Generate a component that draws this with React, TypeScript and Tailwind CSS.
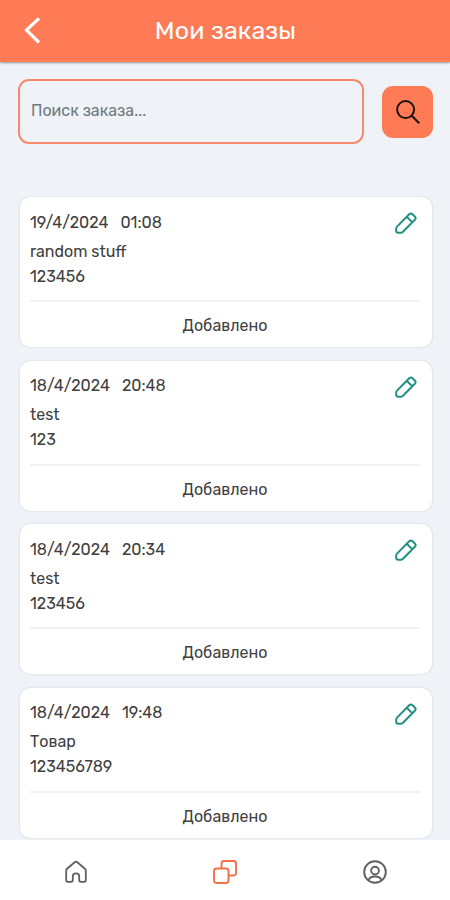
import React from "react";

type Order = {
  date: string;
  time: string;
  title: string;
  code: string;
};

const orders: Order[] = [
  { date: "19/4/2024", time: "01:08", title: "random stuff", code: "123456" },
  { date: "18/4/2024", time: "20:48", title: "test", code: "123" },
  { date: "18/4/2024", time: "20:34", title: "test", code: "123456" },
  { date: "18/4/2024", time: "19:48", title: "Товар", code: "123456789" },
];

function Pencil() {
  return (
    <svg className="h-[22px] w-[22px]" viewBox="0 0 22 22" fill="none" stroke="#209180" strokeWidth="2" strokeLinecap="round" strokeLinejoin="round">
      <path d="M2 14.600 14.200 2.200q1.700-1.500 3.300 0l2.300 2.300q1.600 1.600 0 3.300L7.700 20q-.8.8-2 .8H3.200q-2 0-2-2v-2.200q0-1.200.8-2ZM12 5l5.100 5.100" />
    </svg>
  );
}

function OrderCard({ order }: { order: Order }) {
  return (
    <article className="flex h-[150px] shrink-0 flex-col rounded-[10px] bg-white pl-[10px] pr-[12px] shadow-[0_0_2px_rgba(80,95,120,0.28)]">
      <div className="flex h-[105px] justify-between border-b-2 border-[#eff1f3] pr-[3px] pt-[13.5px]">
        <div className="text-base text-[#404040]">
          <div className="flex h-6 gap-[12px] leading-6">
            <span className="whitespace-nowrap">{order.date}</span>
            <span>{order.time}</span>
          </div>
          <div className="mt-[5px] h-6 leading-6">{order.title}</div>
          <div className="mt-px h-6 leading-6">{order.code}</div>
        </div>
        <button aria-label="Edit" className="mt-[1.5px] h-[22px]"><Pencil /></button>
      </div>
      <div className="flex h-[45px] items-center justify-center pt-[3px] text-base text-[#404040]">Добавлено</div>
    </article>
  );
}

export default function App() {
  return (
    <div className="flex h-[900px] w-[450px] flex-col overflow-hidden bg-[#eff3f8] font-['Rubik','Roboto',sans-serif]">
      <header className="z-10 grid h-[62px] shrink-0 grid-cols-[65px_320px_65px] items-center bg-[#ff7b55] shadow-[0_1px_2px_rgba(0,0,0,0.4)]">
        <button aria-label="Back" className="pl-[23px]">
          <svg className="h-[28px] w-[18px]" viewBox="0 0 18 28" fill="none" stroke="white" strokeWidth="3.2">
            <path d="M16 1.300 3.500 13.100 16 25.500" />
          </svg>
        </button>
        <h1 className="pl-[1px] text-center text-[25px] leading-8 tracking-[0.15px] text-white">Мои заказы</h1>
      </header>
      <div className="flex h-[134px] shrink-0 items-start justify-between pl-[18px] pr-[17px] pt-[17px]">
        <div className="flex h-[65px] w-[346px] items-center rounded-[11px] border-2 border-[#f68a6c] pb-[2px] pl-[11px]">
          <input aria-label="Search" placeholder="Поиск заказа..." className="w-full bg-transparent text-base outline-none placeholder:text-[#707780]" />
        </div>
        <button aria-label="Find" className="mt-[7px] flex h-[52px] w-[51px] items-center justify-center rounded-[11px] bg-[#ff7b55]">
          <svg className="h-6 w-6" viewBox="0 0 24 24" fill="none" stroke="#17120f" strokeWidth="2">
            <circle cx="9.6" cy="9.6" r="8.5" />
            <path d="m15.8 15.8 7.4 7.4" />
          </svg>
        </button>
      </div>
      <main className="flex h-[644px] shrink-0 flex-col gap-[13.6px] overflow-hidden px-[20px] pr-[18px] pt-px">
        {orders.map((order) => <OrderCard key={`${order.date}-${order.time}`} order={order} />)}
      </main>
      <nav className="grid h-[60px] shrink-0 grid-cols-3 items-center justify-items-center bg-white pl-[1px] pt-[3px]">
        <button aria-label="Home">
          <svg className="h-6 w-6" viewBox="0 0 24 24" fill="none" stroke="#606060" strokeWidth="1.8" strokeLinejoin="round">
            <path d="M2.2 10.5q0-1 .8-1.7l7.7-6.5q1.3-1.1 2.6 0L21 8.800q.8.7.8 1.700v9.600q0 1.700-1.700 1.700h-3.200q-1.700 0-1.700-1.700v-3.700c0-4-6.400-4-6.400 0v3.700q0 1.700-1.700 1.700H3.900q-1.700 0-1.700-1.700Z" />
          </svg>
        </button>
        <button aria-label="Orders">
          <svg className="h-6 w-6" viewBox="0 0 24 24" fill="none" stroke="#f47148" strokeWidth="1.9">
            <rect x="1" y="8.500" width="14.500" height="14.500" rx="2.500" />
            <path d="M8.500 8.500V3.500q0-2.500 2.500-2.500H20.500q2.500 0 2.500 2.500v9.500q0 2.500-2.500 2.500h-5" />
          </svg>
        </button>
        <button aria-label="Profile">
          <svg className="h-6 w-6" viewBox="0 0 24 24" fill="none" stroke="#606060" strokeWidth="1.9">
            <circle cx="12" cy="12" r="10.800" />
            <circle cx="12" cy="10.600" r="3.900" />
            <path d="M5.500 20.300c1.600-5.100 11.400-5.100 13 0" />
          </svg>
        </button>
      </nav>
    </div>
  );
}
